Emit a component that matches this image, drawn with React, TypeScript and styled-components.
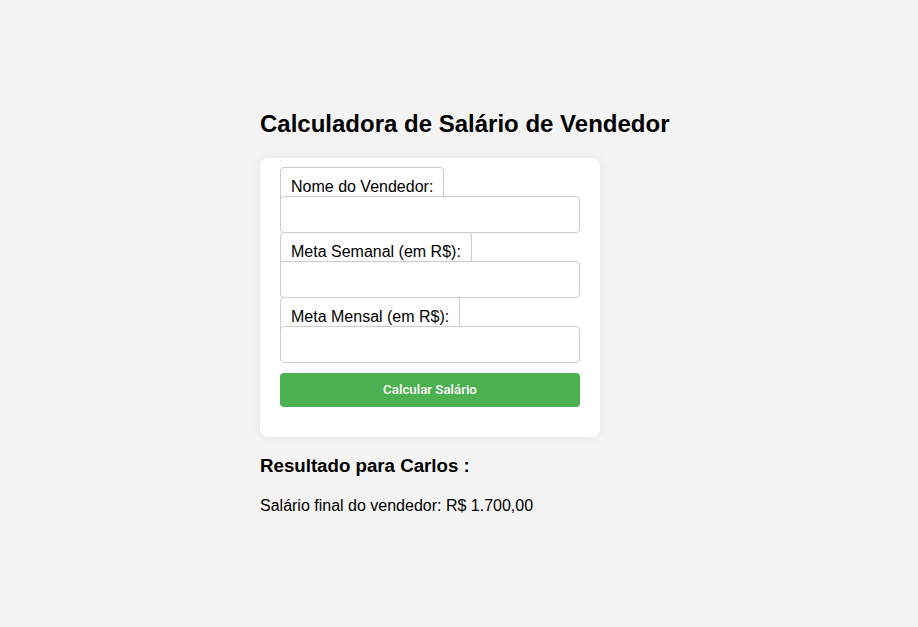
import React from "react";
import styled, { createGlobalStyle } from "styled-components";

const GlobalStyle = createGlobalStyle`
    body {
        margin: 0;
        background-color: #f4f4f4;
        font-family: "Liberation Sans", Arial, sans-serif;
        color: #000;
    }
`;

export default function App() {
    return (
        <>
            <GlobalStyle/>
            <Page>
                <Wrapper>
                    <Title>Calculadora de Salário de Vendedor</Title>
                    <Card>
                        <Label htmlFor="nome">Nome do Vendedor:</Label>
                        <Input id="nome" type="text"/>
                        <Label htmlFor="semanal">Meta Semanal (em R$):</Label>
                        <Input id="semanal" type="number"/>
                        <Label htmlFor="mensal">Meta Mensal (em R$):</Label>
                        <Input id="mensal" type="number"/>
                        <Button type="button">Calcular Salário</Button>
                    </Card>
                    <ResultTitle>Resultado para Carlos :</ResultTitle>
                    <ResultText>Salário final do vendedor: R$ 1.700,00</ResultText>
                </Wrapper>
            </Page>
        </>
    );
}

const Page = styled.div`
    min-height: 100vh;
    display: flex;
    align-items: center;
    justify-content: center;
`;

const Wrapper = styled.div`
    width: 398px;
    padding-bottom: 3px;
    display: flex;
    flex-direction: column;
    align-items: flex-start;
`;

const Title = styled.h1`
    font-size: 24px;
    font-weight: bold;
    white-space: nowrap;
    margin: 0 0 20px;
`;

const Card = styled.div`
    width: 300px;
    padding: 9px 20px 30px;
    background: #fff;
    border-radius: 8px;
    box-shadow: 0 0 10px rgba(0, 0, 0, 0.08);
    display: flex;
    flex-direction: column;
    align-items: flex-start;
`;

const Label = styled.label`
    font-size: 16px;
    line-height: 18px;
    padding: 10px;
    margin-bottom: -11px;
    border: 1px solid #ccc;
    border-radius: 4px;
`;

const Input = styled.input`
    position: relative;
    align-self: stretch;
    box-sizing: border-box;
    height: 37px;
    padding: 10px;
    margin: 0 0 -1px;
    border: 1px solid #ccc;
    border-radius: 4px;
    background: #fff;
    font-size: 14px;
`;

const Button = styled.button`
    align-self: stretch;
    height: 34px;
    margin-top: 11px;
    border: none;
    border-radius: 4px;
    background: #4caf50;
    color: #fff;
    font-family: Roboto, "Liberation Sans", sans-serif;
    font-size: 13.33px;
    font-weight: 500;
    cursor: pointer;
`;

const ResultTitle = styled.h3`
    font-size: 18.7px;
    font-weight: bold;
    margin: 18px 0 0;
`;

const ResultText = styled.p`
    font-size: 16px;
    margin: 20px 0 0;
`;
